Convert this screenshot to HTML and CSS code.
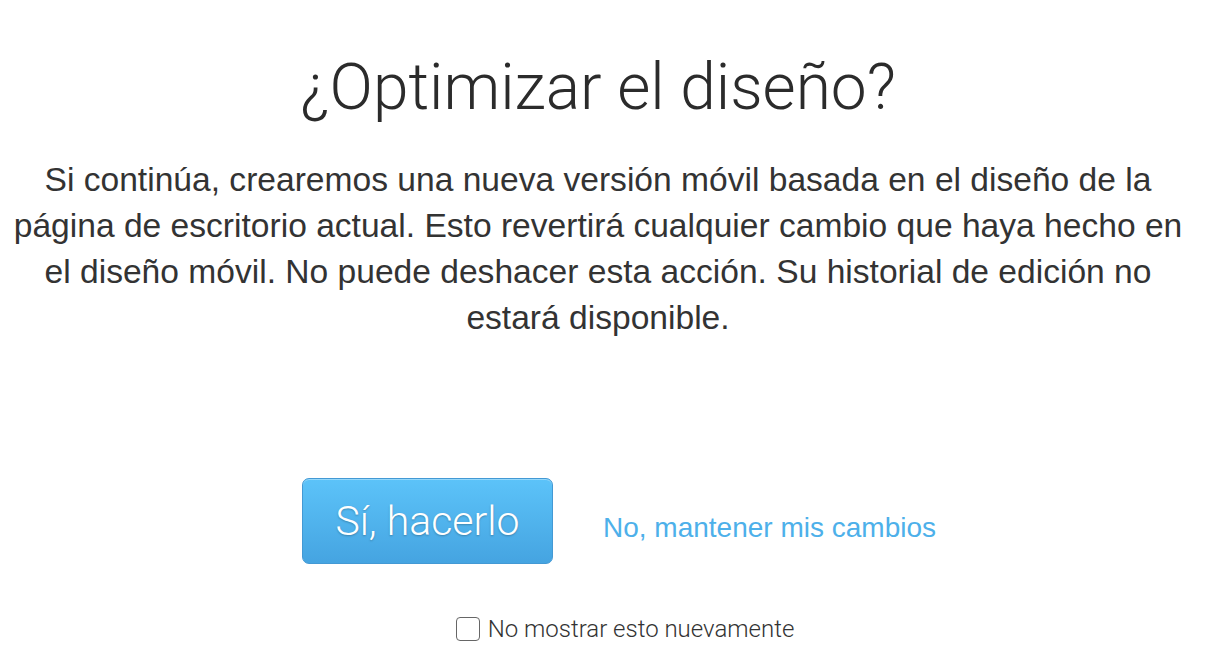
FILE: index.html
```html
<!DOCTYPE html>
<html lang="es">

<head>
    <meta charset="UTF-8">
    <meta name="viewport" content="width=device-width, initial-scale=1.0">
    <title>Optimizar el diseño</title>
    <link rel="stylesheet" href="styles.css">
</head>

<body>
    <main class="dialog">
        <h1 class="dialog-title">¿Optimizar el diseño?</h1>
        <p class="dialog-text">Si continúa, crearemos una nueva versión móvil basada en el diseño de la página de escritorio actual. Esto revertirá cualquier cambio que haya hecho en el diseño móvil. No puede deshacer esta acción. Su historial de edición no estará disponible.</p>

        <div class="dialog-actions">
            <button class="btn-primary">Sí, hacerlo</button>
            <a href="#" class="btn-link">No, mantener mis cambios</a>
        </div>

        <label class="dont-show">
            <input type="checkbox">
            <span class="box"></span>
            No mostrar esto nuevamente
        </label>
    </main>
</body>

</html>
```

FILE: styles.css
```css
body {
    margin: 0;
    background: #fff;
    color: #333;
}

.dialog {
    width: 1180px;
    margin: 0 auto 0 8px;
    display: flex;
    flex-direction: column;
    align-items: center;
    text-align: center;
}

.dialog-title {
    font-family: Roboto, sans-serif;
    font-weight: 300;
    font-size: 64px;
    line-height: 76px;
    color: #2b2b2b;
    margin: 50px 0 0;
}

.dialog-text {
    font-family: "Liberation Sans", Arial, sans-serif;
    font-size: 33.6px;
    line-height: 46px;
    color: #333;
    margin: 31px 0 0;
}

.dialog-actions {
    display: flex;
    align-items: center;
    gap: 50px;
    margin-top: 137px;
    margin-left: 42px;
}

.btn-primary {
    width: 251px;
    height: 86px;
    border: 1px solid #4399d4;
    border-radius: 7px;
    background: linear-gradient(#5cc3f9, #45a4e1);
    color: #fff;
    font-family: Roboto, sans-serif;
    font-weight: 300;
    font-size: 41px;
    text-shadow: 0 1px 2px rgba(0, 0, 0, .25);
    box-shadow: inset 0 1px 0 rgba(255, 255, 255, .35);
    cursor: pointer;
}

.btn-link {
    font-family: "Liberation Sans", Arial, sans-serif;
    font-size: 28px;
    color: #4db0ea;
    text-decoration: none;
    margin-top: 14px;
}

.dont-show {
    display: flex;
    align-items: center;
    gap: 8px;
    margin-top: 51px;
    margin-left: 54px;
    font-family: Roboto, sans-serif;
    font-weight: 300;
    font-size: 24px;
    color: #333;
    cursor: pointer;

    input {
        display: none;
    }

    .box {
        width: 22px;
        height: 22px;
        border: 1.5px solid #666;
        border-radius: 4px;
    }
}
```
